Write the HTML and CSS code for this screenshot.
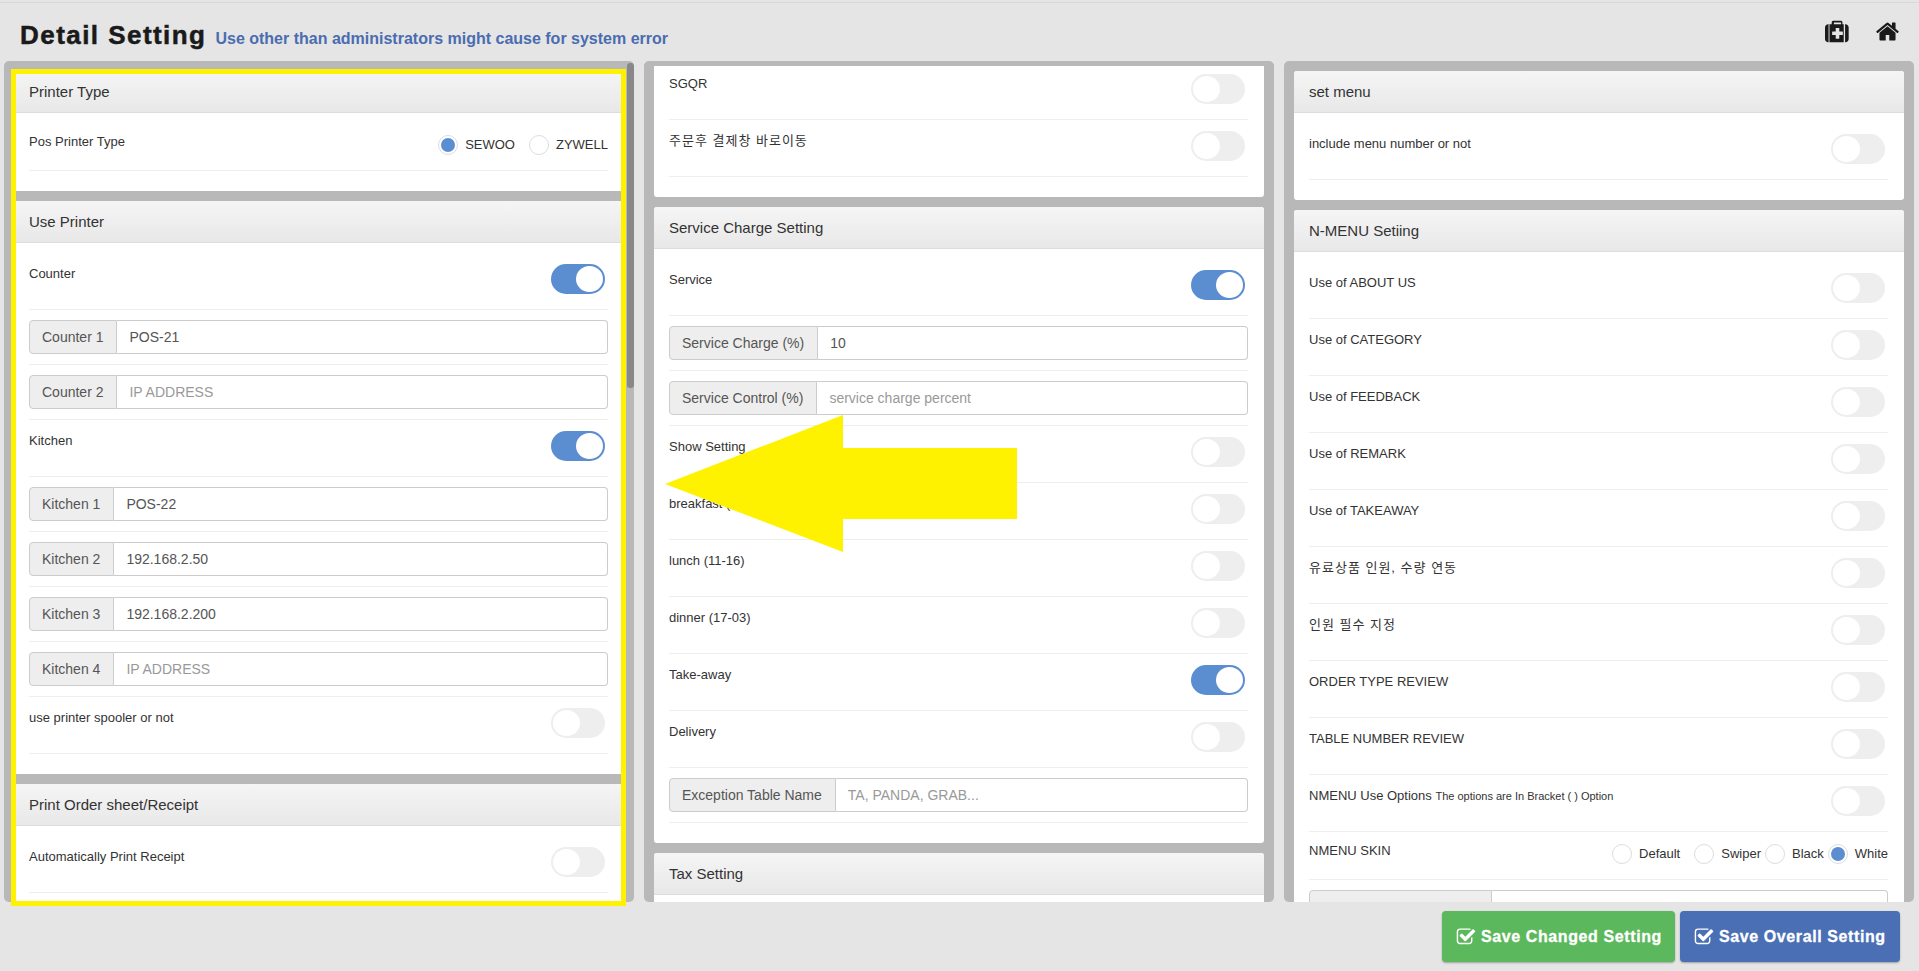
FILE: index.html
```html
<!DOCTYPE html>
<html lang="en">
<head>
    <meta charset="UTF-8">
    <title>Detail Setting</title>
    <link rel="stylesheet" href="styles.css">
</head>
<body>
    <div class="topbar">
        <h2 class="page-title">Detail Setting</h2>
        <span class="page-warning">Use other than administrators might cause for system error</span>
        <div class="top-icons">
            <svg class="top-icon" viewBox="0 0 1792 1792"><path d="M1280 1120v-192q0-14-9-23t-23-9h-224v-224q0-14-9-23t-23-9h-192q-14 0-23 9t-9 23v224h-224q-14 0-23 9t-9 23v192q0 14 9 23t23 9h224v224q0 14 9 23t23 9h192q14 0 23-9t9-23v-224h224q14 0 23-9t9-23zm-640-736h512v-128h-512v128zm-384 0v1280h-32q-92 0-158-66t-66-158v-832q0-92 66-158t158-66h32zm1088 0v1280h-1024v-1280h160v-160q0-40 28-68t68-28h576q40 0 68 28t28 68v160h160zm352 224v832q0 92-66 158t-158 66h-32v-1280h32q92 0 158 66t66 158z"/></svg>
            <svg class="top-icon" viewBox="0 0 1792 1792"><path d="M1472 992v480q0 26-19 45t-45 19h-384v-384h-256v384h-384q-26 0-45-19t-19-45v-480q0-1 .5-3t.5-3l575-474 575 474q1 2 1 6zm223-69l-62 74q-8 9-21 11h-3q-13 0-21-7l-692-577-692 577q-12 8-24 7-13-2-21-11l-62-74q-8-10-7-23.5t11-21.5l719-599q32-26 76-26t76 26l244 204v-195q0-14 9-23t23-9h192q14 0 23 9t9 23v408l219 182q10 8 11 21.5t-7 23.5z"/></svg>
        </div>
    </div>

    <div class="columns">
        <!-- left column -->
        <div class="col">
            <div class="card">
                <div class="card-head">Printer Type</div>
                <div class="card-body">
                    <div class="row row-radio">
                        <span class="label">Pos Printer Type</span>
                        <div class="radios">
                            <label class="radio-item gap-wide"><i class="radio on"></i>SEWOO</label>
                            <label class="radio-item gap-wide"><i class="radio"></i>ZYWELL</label>
                        </div>
                    </div>
                </div>
            </div>
            <div class="card">
                <div class="card-head">Use Printer</div>
                <div class="card-body">
                    <div class="row"><span class="label">Counter</span><div class="toggle on"><i></i></div></div>
                    <div class="row row-input"><div class="input-group"><span class="addon">Counter 1</span><input type="text" value="POS-21"></div></div>
                    <div class="row row-input"><div class="input-group"><span class="addon">Counter 2</span><input type="text" placeholder="IP ADDRESS"></div></div>
                    <div class="row"><span class="label">Kitchen</span><div class="toggle on"><i></i></div></div>
                    <div class="row row-input"><div class="input-group"><span class="addon">Kitchen 1</span><input type="text" value="POS-22"></div></div>
                    <div class="row row-input"><div class="input-group"><span class="addon">Kitchen 2</span><input type="text" value="192.168.2.50"></div></div>
                    <div class="row row-input"><div class="input-group"><span class="addon">Kitchen 3</span><input type="text" value="192.168.2.200"></div></div>
                    <div class="row row-input"><div class="input-group"><span class="addon">Kitchen 4</span><input type="text" placeholder="IP ADDRESS"></div></div>
                    <div class="row"><span class="label">use printer spooler or not</span><div class="toggle"><i></i></div></div>
                </div>
            </div>
            <div class="card">
                <div class="card-head">Print Order sheet/Receipt</div>
                <div class="card-body">
                    <div class="row"><span class="label">Automatically Print Receipt</span><div class="toggle"><i></i></div></div>
                </div>
            </div>
            <div class="scroll-thumb"></div>
        </div>

        <!-- middle column, scrolled down a little -->
        <div class="col col-scrolled">
            <div class="card">
                <div class="card-body">
                    <div class="row"><span class="label">SGQR</span><div class="toggle"><i></i></div></div>
                    <div class="row"><span class="label ko">주문후 결제창 바로이동</span><div class="toggle"><i></i></div></div>
                </div>
            </div>
            <div class="card">
                <div class="card-head">Service Charge Setting</div>
                <div class="card-body">
                    <div class="row"><span class="label">Service</span><div class="toggle on"><i></i></div></div>
                    <div class="row row-input"><div class="input-group"><span class="addon">Service Charge (%)</span><input type="text" value="10"></div></div>
                    <div class="row row-input"><div class="input-group"><span class="addon">Service Control (%)</span><input type="text" placeholder="service charge percent"></div></div>
                    <div class="row"><span class="label">Show Setting</span><div class="toggle"><i></i></div></div>
                    <div class="row"><span class="label">breakfast (04-11)</span><div class="toggle"><i></i></div></div>
                    <div class="row"><span class="label">lunch (11-16)</span><div class="toggle"><i></i></div></div>
                    <div class="row"><span class="label">dinner (17-03)</span><div class="toggle"><i></i></div></div>
                    <div class="row"><span class="label">Take-away</span><div class="toggle on"><i></i></div></div>
                    <div class="row"><span class="label">Delivery</span><div class="toggle"><i></i></div></div>
                    <div class="row row-input"><div class="input-group"><span class="addon">Exception Table Name</span><input type="text" placeholder="TA, PANDA, GRAB..."></div></div>
                </div>
            </div>
            <div class="card">
                <div class="card-head">Tax Setting</div>
                <div class="card-body"></div>
            </div>
        </div>

        <!-- right column -->
        <div class="col">
            <div class="card">
                <div class="card-head">set menu</div>
                <div class="card-body">
                    <div class="row"><span class="label">include menu number or not</span><div class="toggle"><i></i></div></div>
                </div>
            </div>
            <div class="card">
                <div class="card-head">N-MENU Setiing</div>
                <div class="card-body">
                    <div class="row"><span class="label">Use of ABOUT US</span><div class="toggle"><i></i></div></div>
                    <div class="row"><span class="label">Use of CATEGORY</span><div class="toggle"><i></i></div></div>
                    <div class="row"><span class="label">Use of FEEDBACK</span><div class="toggle"><i></i></div></div>
                    <div class="row"><span class="label">Use of REMARK</span><div class="toggle"><i></i></div></div>
                    <div class="row"><span class="label">Use of TAKEAWAY</span><div class="toggle"><i></i></div></div>
                    <div class="row"><span class="label ko">유료상품 인원, 수량 연동</span><div class="toggle"><i></i></div></div>
                    <div class="row"><span class="label ko">인원 필수 지정</span><div class="toggle"><i></i></div></div>
                    <div class="row"><span class="label">ORDER TYPE REVIEW</span><div class="toggle"><i></i></div></div>
                    <div class="row"><span class="label">TABLE NUMBER REVIEW</span><div class="toggle"><i></i></div></div>
                    <div class="row"><span class="label">NMENU Use Options <small>The options are In Bracket ( ) Option</small></span><div class="toggle"><i></i></div></div>
                    <div class="row row-radio">
                        <span class="label">NMENU SKIN</span>
                        <div class="radios">
                            <label class="radio-item"><i class="radio"></i>Default</label>
                            <label class="radio-item gap-wide"><i class="radio"></i>Swiper</label>
                            <label class="radio-item"><i class="radio"></i>Black</label>
                            <label class="radio-item"><i class="radio on"></i>White</label>
                        </div>
                    </div>
                    <div class="row row-input"><div class="input-group"><span class="addon addon-blank"></span><input type="text"></div></div>
                </div>
            </div>
        </div>
    </div>

    <div class="footer">
        <button class="btn btn-green">
            <svg class="btn-icon" viewBox="0 0 1792 1792"><path d="M1472 930v318q0 119-84.5 203.5t-203.5 84.5h-832q-119 0-203.5-84.5t-84.5-203.5v-832q0-119 84.5-203.5t203.5-84.5h832q63 0 117 25 15 7 18 23 3 17-9 29l-49 49q-10 10-23 10-3 0-9-2-23-6-45-6h-832q-66 0-113 47t-47 113v832q0 66 47 113t113 47h832q66 0 113-47t47-113v-254q0-13 9-22l64-64q10-10 23-10 6 0 12 3 20 8 20 29zm231-489l-814 814q-24 24-57 24t-57-24l-430-430q-24-24-24-57t24-57l110-110q24-24 57-24t57 24l263 263 647-647q24-24 57-24t57 24l110 110q24 24 24 57t-24 57z"/></svg>
            Save Changed Setting
        </button>
        <button class="btn btn-blue">
            <svg class="btn-icon" viewBox="0 0 1792 1792"><path d="M1472 930v318q0 119-84.5 203.5t-203.5 84.5h-832q-119 0-203.5-84.5t-84.5-203.5v-832q0-119 84.5-203.5t203.5-84.5h832q63 0 117 25 15 7 18 23 3 17-9 29l-49 49q-10 10-23 10-3 0-9-2-23-6-45-6h-832q-66 0-113 47t-47 113v832q0 66 47 113t113 47h832q66 0 113-47t47-113v-254q0-13 9-22l64-64q10-10 23-10 6 0 12 3 20 8 20 29zm231-489l-814 814q-24 24-57 24t-57-24l-430-430q-24-24-24-57t24-57l110-110q24-24 57-24t57 24l263 263 647-647q24-24 57-24t57 24l110 110q24 24 24 57t-24 57z"/></svg>
            Save Overall Setting
        </button>
    </div>

    <!-- yellow annotation drawn on top of the screenshot -->
    <div class="note-frame"></div>
    <svg class="note-arrow" viewBox="0 0 353 138"><polygon points="0,69 178,0 178,33 352,33 352,104 178,104 178,137"/></svg>
</body>
</html>
```
FILE: styles.css
```css
* {
    box-sizing: border-box;
}
html, body {
    margin: 0;
    height: 100%;
    overflow: hidden;
}
body {
    background-color: #e5e5e5;
    color: #333333;
    font-family: "Liberation Sans", "Noto Sans CJK KR", sans-serif;
    font-size: 13px;
}
.topbar {
    display: flex;
    align-items: baseline;
    height: 59px;
    margin-top: 2px;
    padding: 20px 19px 0 20px;
    border-top: 1px solid #d8d8d8;
}
.page-title {
    margin: 0;
    color: #1a1a1a;
    font-size: 26px;
    font-weight: bold;
    letter-spacing: 1.45px;
    line-height: 24px;
    -webkit-text-stroke: 0.5px #1a1a1a;
}
.page-warning {
    margin-left: 9px;
    color: #4a6cb0;
    font-size: 16px;
    font-weight: bold;
}
.top-icons {
    display: flex;
    gap: 25px;
    align-self: flex-start;
    margin-left: auto;
    margin-top: -4px;
}
.top-icon {
    width: 25px;
    height: 25px;
    fill: #1a1a1a;
}
.columns {
    display: flex;
    gap: 10px;
    height: 841px;
    padding: 0 5px 0 4px;
}
.col {
    position: relative;
    flex: 0 0 630px;
    padding: 10px 10px 0;
    overflow: hidden;
    background-color: #b8b8b8;
    border-radius: 5px;
}
.col-scrolled {
    padding-top: 0;
    border-top: 5px solid #b8b8b8;
}
.col-scrolled .card:first-child {
    margin-top: -3px;
}
.col-scrolled .card:first-child .card-body {
    padding-top: 0;
}
.scroll-thumb {
    position: absolute;
    top: 2px;
    right: 0;
    width: 7px;
    height: 325px;
    background-color: #888888;
    border-radius: 3px;
}
.card {
    margin-bottom: 10px;
    background-color: #ffffff;
    border-radius: 3px;
}
.card-head {
    height: 42px;
    padding: 0 15px;
    background: linear-gradient(#f5f5f5, #e8e8e8);
    border-bottom: 1px solid #dddddd;
    border-radius: 3px 3px 0 0;
    font-size: 15px;
    line-height: 41px;
}
.card-body {
    padding: 10px 16px 20px 15px;
}
.row {
    display: flex;
    justify-content: space-between;
    padding: 11px 3px 15px 0;
    border-bottom: 1px solid #eeeeee;
}
.row-radio {
    padding: 12px 0 15px;
}
.row-input {
    padding: 10px 0;
}
.label {
    margin-top: 1px;
    line-height: 18px;
}
.ko {
    letter-spacing: 1px;
}
.row-radio .label {
    margin-top: -2px;
}
.label small {
    font-size: 11px;
}
.toggle {
    display: flex;
    flex: none;
    width: 54px;
    height: 30px;
    padding: 2px;
    background-color: #eeeeee;
    border-radius: 15px;
}
.toggle i {
    width: 27px;
    height: 26px;
    background-color: #ffffff;
    border-radius: 50%;
}
.toggle.on {
    justify-content: flex-end;
    background-color: #5b8dd1;
}
.radios {
    display: flex;
}
.radio-item {
    display: flex;
    align-items: center;
    margin-left: 4px;
    line-height: 20px;
}
.radio-item.gap-wide {
    margin-left: 14px;
}
.radio {
    display: flex;
    align-items: center;
    justify-content: center;
    width: 20px;
    height: 20px;
    margin-right: 7px;
    background-color: #ffffff;
    border: 1px solid #dddddd;
    border-radius: 50%;
}
.radio.on::after {
    content: "";
    width: 14px;
    height: 14px;
    background-color: #5b8dd1;
    border-radius: 50%;
}
.input-group {
    display: flex;
    width: 100%;
    height: 34px;
    font-size: 14px;
}
.addon {
    padding: 0 13px 0 12px;
    color: #555555;
    background-color: #eeeeee;
    border: 1px solid #cccccc;
    border-radius: 4px 0 0 4px;
    line-height: 32px;
    white-space: nowrap;
}
.addon-blank {
    width: 183px;
}
.input-group input {
    flex: 1;
    min-width: 0;
    padding: 0 12px;
    color: #555555;
    background-color: #ffffff;
    border: 1px solid #cccccc;
    border-left: none;
    border-radius: 0 4px 4px 0;
    font-family: inherit;
    font-size: 14px;
}
.input-group input::placeholder {
    color: #999999;
}
.footer {
    display: flex;
    justify-content: flex-end;
    gap: 5px;
    padding: 9px 19px 0 0;
}
.btn {
    display: flex;
    align-items: center;
    gap: 5px;
    height: 51px;
    padding: 0 0 0 14px;
    color: #ffffff;
    border: none;
    border-radius: 4px;
    box-shadow: 0 1px 2px rgba(0, 0, 0, 0.3);
    font-family: inherit;
    font-size: 16px;
    font-weight: bold;
    letter-spacing: 0.6px;
    -webkit-text-stroke: 0.3px #ffffff;
    white-space: nowrap;
}
.btn-green {
    width: 233px;
    background-color: #5cb85c;
}
.btn-blue {
    width: 220px;
    background-color: #4a6fb5;
}
.btn-icon {
    width: 20px;
    height: 20px;
    fill: #ffffff;
}
.note-frame {
    position: absolute;
    top: 69px;
    left: 11px;
    width: 615px;
    height: 837px;
    border: 5px solid #fff200;
}
.note-arrow {
    position: absolute;
    top: 415px;
    left: 665px;
    width: 353px;
    height: 138px;
    fill: #fff200;
}
```
